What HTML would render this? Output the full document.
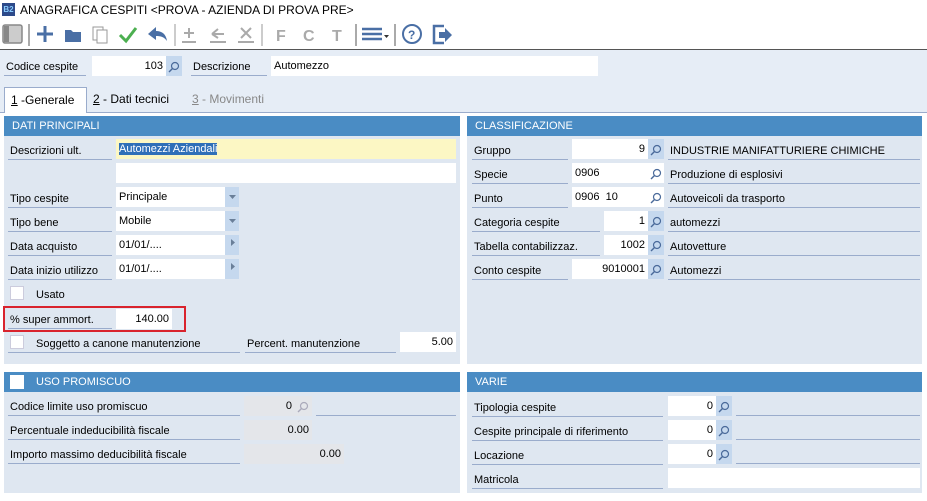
<!DOCTYPE html><html><head><style>
*{box-sizing:border-box;margin:0;padding:0}
body{width:927px;height:501px;background:#fff;font-family:"Liberation Sans",sans-serif;font-size:11px;color:#000;position:relative;overflow:hidden}
.a{position:absolute}
.lbl{position:absolute;border-bottom:1px solid #9aaccc;padding-left:2px;padding-top:2px;line-height:18px;height:20px;font-size:11px}
.in{position:absolute;background:#fff;height:20px;line-height:20px;padding:0 3px;font-size:11px}
.r{text-align:right}
.btn{position:absolute;background:#c5d8ee;height:20px;width:16px}
.hd{position:absolute;background:#4a8cc4;color:#fff;height:20px;line-height:20px;padding-left:8px;font-size:11px}
.pn{position:absolute;background:#dfe7f1}
.ln{position:absolute;border-bottom:1px solid #9aaccc;height:20px}
.cb{position:absolute;width:14px;height:14px;background:#fff;border:1px solid #ccd}
svg{position:absolute}
</style></head><body>
<div class="a" style="left:2px;top:3px;width:13px;height:13px;background:#2d4a8a;color:#8cf;font-size:8px;line-height:13px;text-align:center;font-weight:bold">B2</div>
<div class="a" style="left:20px;top:3px;font-size:12px">ANAGRAFICA CESPITI &lt;PROVA - AZIENDA DI PROVA PRE&gt;</div>
<svg style="left:0;top:22px" width="470" height="26" viewBox="0 0 470 26">
<rect x="3" y="3" width="19" height="18" rx="2" fill="#ccc" stroke="#888" stroke-width="1.5"/><rect x="4" y="4" width="5" height="16" fill="#888"/>
<line x1="29" y1="2" x2="29" y2="24" stroke="#555"/>
<path d="M45 4v16M37 12h16" stroke="#4a6fa5" stroke-width="3"/>
<path d="M65 8h6l2 2h8v10h-16z" fill="#4a6fa5"/>
<rect x="93" y="5" width="10" height="13" fill="#fff" stroke="#999"/><rect x="97" y="8" width="10" height="13" fill="#fff" stroke="#999"/>
<path d="M120 13l6 6 10-13" stroke="#4caf50" stroke-width="3" fill="none"/>
<path d="M148 12l8-7v4c6 0 10 3 11 10-3-4-6-5-11-5v4z" fill="#4a6fa5"/>
<line x1="175" y1="2" x2="175" y2="24" stroke="#999"/>
<g stroke="#aaa" stroke-width="2" fill="none"><path d="M189 6v10M184 11h10M182 20h14"/><path d="M212 12l6-5M212 12l6 4M212 12h12M210 20h16"/><path d="M241 6l10 10M251 6l-10 10M238 20h16"/></g>
<line x1="262" y1="2" x2="262" y2="24" stroke="#999"/>
<text x="276" y="19" font-family="Liberation Sans" font-weight="bold" font-size="16" fill="#aaa">F</text>
<text x="303" y="19" font-family="Liberation Sans" font-weight="bold" font-size="16" fill="#aaa">C</text>
<text x="332" y="19" font-family="Liberation Sans" font-weight="bold" font-size="16" fill="#aaa">T</text>
<line x1="356" y1="2" x2="356" y2="24" stroke="#555"/>
<path d="M362 7h20M362 12h20M362 17h20" stroke="#4a6fa5" stroke-width="2.5"/><path d="M384 13h5l-2.5 3z" fill="#333"/>
<line x1="395" y1="2" x2="395" y2="24" stroke="#555"/>
<circle cx="412" cy="12" r="9" fill="none" stroke="#4a6fa5" stroke-width="2"/><text x="408" y="17" font-family="Liberation Sans" font-weight="bold" font-size="12" fill="#4a6fa5">?</text>
<path d="M444 4h-10v17h10" stroke="#4a6fa5" stroke-width="2.5" fill="none"/><path d="M439 10h6v-4l7 7-7 7v-4h-6z" fill="#4a6fa5"/>
</svg>
<div class="a" style="left:0;top:49px;width:927px;height:1px;background:#555"></div>
<div class="a" style="left:0;top:50px;width:927px;height:63px;background:#e6edf6"></div>
<div class="lbl" style="left:4px;top:56px;width:82px">Codice cespite</div>
<div class="in r" style="left:92px;top:56px;width:74px">103</div>
<div class="btn" style="left:166px;top:56px"></div>
<div class="lbl" style="left:191px;top:56px;width:76px">Descrizione</div>
<div class="in" style="left:271px;top:56px;width:327px">Automezzo</div>
<div class="a" style="left:4px;top:87px;width:83px;height:26px;background:#fff;border:1px solid #9aaccc;border-bottom:none;font-size:12px;line-height:24px;padding-left:6px"><u>1</u> -Generale</div>
<div class="a" style="left:93px;top:92px;font-size:12px"><u>2</u> - Dati tecnici</div>
<div class="a" style="left:192px;top:92px;font-size:12px;color:#888"><u>3</u> - Movimenti</div>
<div class="a" style="left:0;top:112px;width:927px;height:1px;background:#9aaccc"></div>
<div class="a" style="left:5px;top:112px;width:81px;height:1px;background:#fff"></div>

<div class="pn" style="left:4px;top:116px;width:456px;height:248px"></div>
<div class="hd" style="left:4px;top:116px;width:456px">DATI PRINCIPALI</div>
<div class="lbl" style="left:8px;top:140px;width:104px">Descrizioni ult.</div>
<div class="in" style="left:116px;top:139px;width:340px;background:#fcf7c4"><span style="background:#2f6fb8;color:#fff">Automezzi Aziendali</span></div>
<div class="in" style="left:116px;top:163px;width:340px"></div>
<div class="lbl" style="left:8px;top:188px;width:104px">Tipo cespite</div>
<div class="in" style="left:116px;top:187px;width:109px">Principale</div><div class="btn" style="left:225px;top:187px;width:14px"></div>
<div class="lbl" style="left:8px;top:212px;width:104px">Tipo bene</div>
<div class="in" style="left:116px;top:211px;width:109px">Mobile</div><div class="btn" style="left:225px;top:211px;width:14px"></div>
<div class="lbl" style="left:8px;top:236px;width:104px">Data acquisto</div>
<div class="in" style="left:116px;top:235px;width:109px">01/01/....</div><div class="btn" style="left:225px;top:235px;width:14px"></div>
<div class="lbl" style="left:8px;top:260px;width:104px">Data inizio utilizzo</div>
<div class="in" style="left:116px;top:259px;width:109px">01/01/....</div><div class="btn" style="left:225px;top:259px;width:14px"></div>
<svg style="left:229px;top:192px" width="8" height="90"><path d="M0 3h7l-3.5 4z M0 27h7l-3.5 4z M2 47v7l4-3.5z M2 71v7l4-3.5z" fill="#6a7f99"/></svg>
<div class="cb" style="left:10px;top:286px"></div><div class="a" style="left:36px;top:289px">Usato</div>
<div class="a" style="left:3px;top:306px;width:183px;height:26px;border:2px solid #d9232d"></div>
<div class="lbl" style="left:8px;top:309px;width:104px">% super ammort.</div>
<div class="in r" style="left:116px;top:309px;width:56px">140.00</div>
<div class="cb" style="left:10px;top:335px"></div>
<div class="lbl" style="left:8px;top:333px;width:232px;padding-left:28px">Soggetto a canone manutenzione</div>
<div class="lbl" style="left:245px;top:333px;width:151px">Percent. manutenzione</div>
<div class="in r" style="left:400px;top:332px;width:56px">5.00</div>

<div class="pn" style="left:467px;top:116px;width:455px;height:248px"></div>
<div class="hd" style="left:467px;top:116px;width:455px">CLASSIFICAZIONE</div>
<div class="lbl" style="left:472px;top:140px;width:96px">Gruppo</div>
<div class="in r" style="left:572px;top:139px;width:76px">9</div><div class="btn" style="left:648px;top:139px"></div>
<div class="lbl" style="left:668px;top:140px;width:252px">INDUSTRIE MANIFATTURIERE CHIMICHE</div>
<div class="lbl" style="left:472px;top:164px;width:96px">Specie</div>
<div class="in" style="left:572px;top:163px;width:76px">0906</div><div class="btn" style="left:648px;top:163px;background:#fff"></div>
<div class="lbl" style="left:668px;top:164px;width:252px">Produzione di esplosivi</div>
<div class="lbl" style="left:472px;top:188px;width:96px">Punto</div>
<div class="in" style="left:572px;top:187px;width:76px">0906&nbsp; 10</div><div class="btn" style="left:648px;top:187px;background:#fff"></div>
<div class="lbl" style="left:668px;top:188px;width:252px">Autoveicoli da trasporto</div>
<div class="lbl" style="left:472px;top:212px;width:128px">Categoria cespite</div>
<div class="in r" style="left:604px;top:211px;width:44px">1</div><div class="btn" style="left:648px;top:211px"></div>
<div class="lbl" style="left:668px;top:212px;width:252px">automezzi</div>
<div class="lbl" style="left:472px;top:236px;width:128px">Tabella contabilizzaz.</div>
<div class="in r" style="left:604px;top:235px;width:44px">1002</div><div class="btn" style="left:648px;top:235px"></div>
<div class="lbl" style="left:668px;top:236px;width:252px">Autovetture</div>
<div class="lbl" style="left:472px;top:260px;width:96px">Conto cespite</div>
<div class="in r" style="left:572px;top:259px;width:76px">9010001</div><div class="btn" style="left:648px;top:259px"></div>
<div class="lbl" style="left:668px;top:260px;width:252px">Automezzi</div>

<div class="pn" style="left:4px;top:372px;width:456px;height:121px"></div>
<div class="hd" style="left:4px;top:372px;width:456px;padding-left:32px">USO PROMISCUO</div>
<div class="cb" style="left:10px;top:375px;border:none"></div>
<div class="lbl" style="left:8px;top:396px;width:232px">Codice limite uso promiscuo</div>
<div class="in r" style="left:244px;top:396px;width:68px;background:#e4e6ea;padding-right:20px">0</div>
<div class="ln" style="left:316px;top:396px;width:140px"></div>
<div class="lbl" style="left:8px;top:420px;width:232px">Percentuale indeducibilità fiscale</div>
<div class="in r" style="left:244px;top:420px;width:68px;background:#e4e6ea">0.00</div>
<div class="lbl" style="left:8px;top:444px;width:232px">Importo massimo deducibilità fiscale</div>
<div class="in r" style="left:244px;top:444px;width:100px;background:#e4e6ea">0.00</div>

<div class="pn" style="left:467px;top:372px;width:455px;height:121px"></div>
<div class="hd" style="left:467px;top:372px;width:455px">VARIE</div>
<div class="lbl" style="left:472px;top:397px;width:191px">Tipologia cespite</div>
<div class="in r" style="left:668px;top:396px;width:48px">0</div><div class="btn" style="left:716px;top:396px"></div>
<div class="ln" style="left:736px;top:396px;width:184px"></div>
<div class="lbl" style="left:472px;top:421px;width:191px">Cespite principale di riferimento</div>
<div class="in r" style="left:668px;top:420px;width:48px">0</div><div class="btn" style="left:716px;top:420px"></div>
<div class="ln" style="left:736px;top:420px;width:184px"></div>
<div class="lbl" style="left:472px;top:445px;width:191px">Locazione</div>
<div class="in r" style="left:668px;top:444px;width:48px">0</div><div class="btn" style="left:716px;top:444px"></div>
<div class="ln" style="left:736px;top:444px;width:184px"></div>
<div class="lbl" style="left:472px;top:469px;width:191px">Matricola</div>
<div class="in" style="left:668px;top:468px;width:252px"></div>

<svg style="left:0;top:0" width="927" height="501">
<defs><g id="m"><circle cx="9" cy="7" r="3.5" fill="none" stroke-width="1.2"/><path d="M6.5 9.5l-3.5 3.5" stroke-width="1.4"/></g></defs>
<g stroke="#4a6a9a">
<use href="#m" x="166" y="59"/>
<use href="#m" x="648" y="142"/><use href="#m" x="648" y="166"/><use href="#m" x="648" y="190"/><use href="#m" x="648" y="214"/><use href="#m" x="648" y="238"/><use href="#m" x="648" y="262"/>
<use href="#m" x="716" y="399"/><use href="#m" x="716" y="423"/><use href="#m" x="716" y="447"/>
</g>
<g stroke="#aab"><use href="#m" x="295" y="399"/></g>
</svg>
</body></html>
